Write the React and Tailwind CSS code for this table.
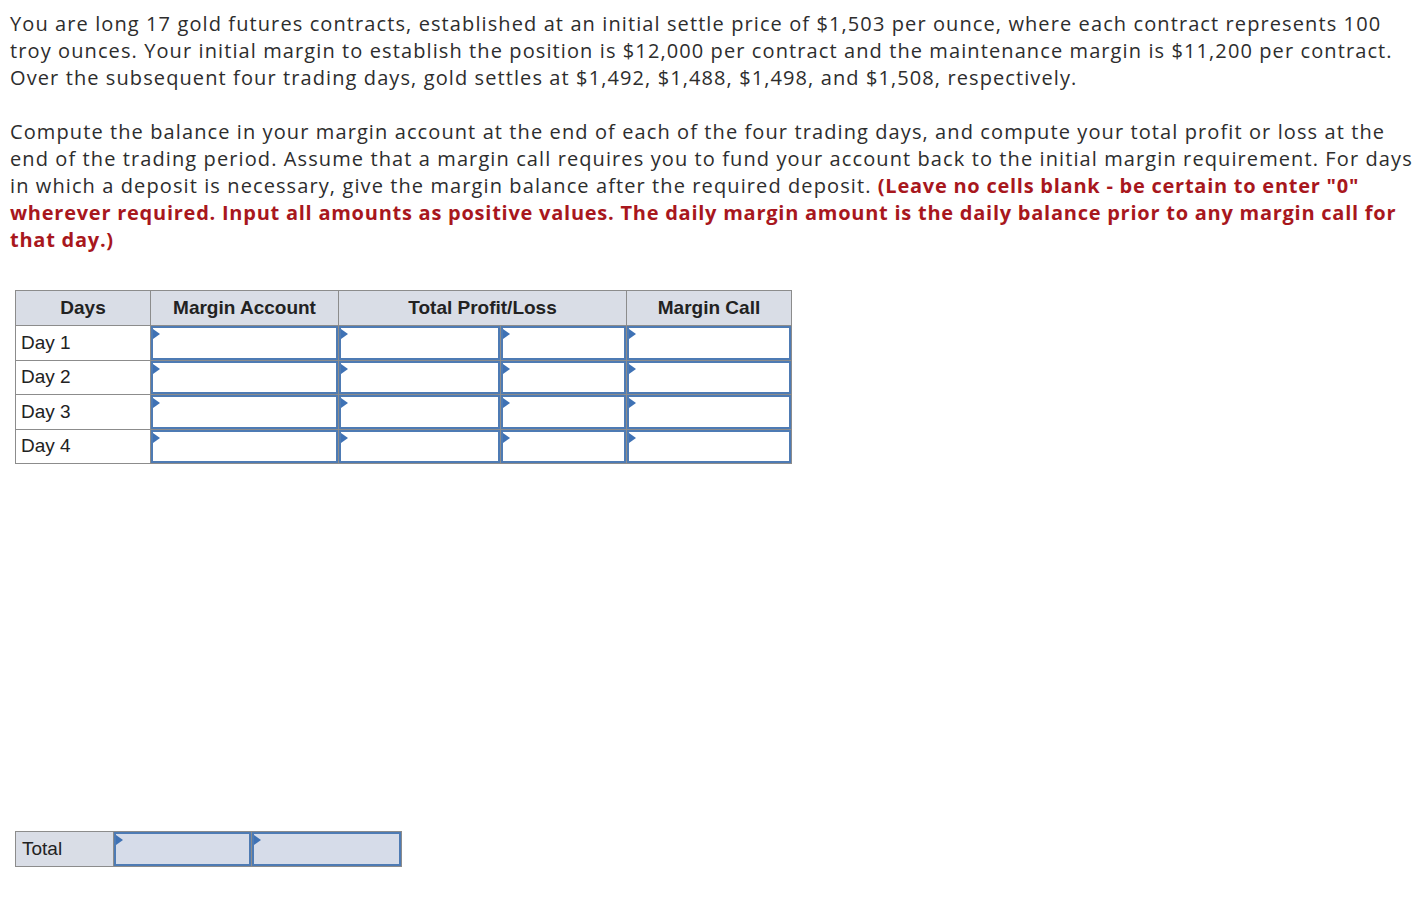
export default function App() {
  const font = { fontFamily: '"Open Sans", sans-serif' };
  const Flag = () => (
    <span className="absolute left-[2px] top-[3px] w-0 h-0 border-t-[5px] border-b-[5px] border-l-[7px] border-t-transparent border-b-transparent border-l-[#3f72b5]" />
  );
  const InputCell = ({ w, bg = "bg-white" }) => (
    <td className={`relative p-0 border border-[#8c8c8c] ${w}`}>
      <div className={`h-[33.5px] border-2 border-[#4e7bb4] ${bg}`} />
      <Flag />
    </td>
  );
  const days = ["Day 1", "Day 2", "Day 3", "Day 4"];
  const red = "text-[#a8171d] font-bold tracking-[0.75px]";
  return (
    <div className="w-[1426px] min-h-[901px] bg-white text-[#2d2d2d]">
      <div className="pl-[10px] pt-[10px] text-[20px] leading-[27px] tracking-[1.1px] whitespace-nowrap" style={font}>
        <p>
          You are long 17 gold futures contracts, established at an initial settle price of $1,503 per ounce, where each contract represents 100<br />
          troy ounces. Your initial margin to establish the position is $12,000 per contract and the maintenance margin is $11,200 per contract.<br />
          Over the subsequent four trading days, gold settles at $1,492, $1,488, $1,498, and $1,508, respectively.
        </p>
        <p className="mt-[27px]">
          Compute the balance in your margin account at the end of each of the four trading days, and compute your total profit or loss at the<br />
          end of the trading period. Assume that a margin call requires you to fund your account back to the initial margin requirement. For days<br />
          in which a deposit is necessary, give the margin balance after the required deposit.{" "}
          <b className={red}>(Leave no cells blank - be certain to enter "0"</b><br />
          <b className={red}>wherever required. Input all amounts as positive values. The daily margin amount is the daily balance prior to any margin call for</b><br />
          <b className={red}>that day.)</b>
        </p>
      </div>

      <div className="pl-[15px] mt-[37px]" style={{ fontFamily: '"Liberation Sans", Arial, sans-serif' }}>
        <table className="border-collapse text-[19px] text-[#222]">
          <thead>
            <tr className="bg-[#d9dde6] h-[35px]">
              <th className="border border-[#8c8c8c] w-[135px] font-bold text-center">Days</th>
              <th className="border border-[#8c8c8c] w-[188px] font-bold text-center">Margin Account</th>
              <th colSpan={2} className="border border-[#8c8c8c] w-[288px] font-bold text-center">Total Profit/Loss</th>
              <th className="border border-[#8c8c8c] w-[165px] font-bold text-center">Margin Call</th>
            </tr>
          </thead>
          <tbody>
            {days.map((d) => (
              <tr key={d}>
                <td className="border border-[#8c8c8c] px-[5px] w-[135px]">{d}</td>
                <InputCell w="w-[188px]" />
                <InputCell w="w-[162px]" />
                <InputCell w="w-[126px]" />
                <InputCell w="w-[165px]" />
              </tr>
            ))}
          </tbody>
        </table>

        <table className="border-collapse text-[19px] text-[#222] mt-[367px]">
          <tbody>
            <tr>
              <td className="border border-[#8c8c8c] bg-[#d9dde6] px-[6px] w-[98px]">Total</td>
              <InputCell w="w-[138px]" bg="bg-[#d6dce9]" />
              <InputCell w="w-[150px]" bg="bg-[#d6dce9]" />
            </tr>
          </tbody>
        </table>
      </div>
    </div>
  );
}
